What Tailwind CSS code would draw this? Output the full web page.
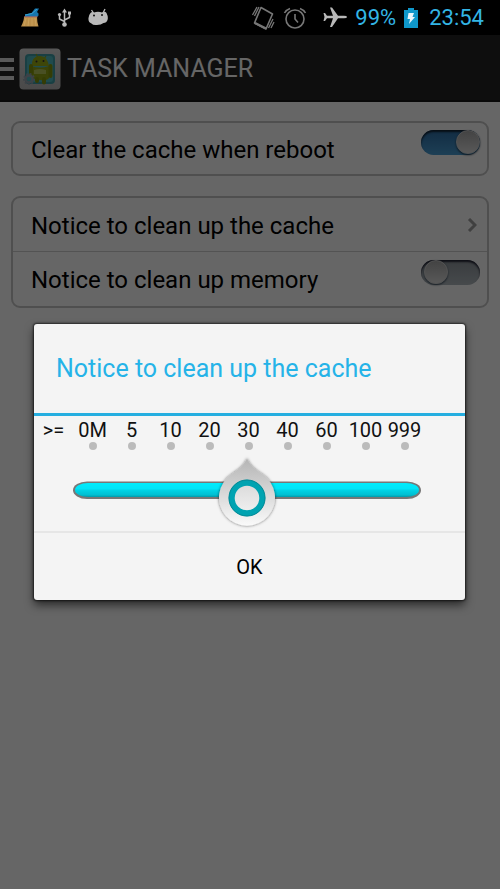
<!DOCTYPE html>
<html lang="en">
  <head>
    <meta charset="UTF-8" />
    <meta name="viewport" content="width=device-width, initial-scale=1.0" />
    <title>Task Manager</title>
    <script src="https://cdn.jsdelivr.net/npm/@tailwindcss/browser@4"></script>
  </head>

  <body class="bg-white font-[Roboto,sans-serif] text-black">
    <div class="min-h-screen flex flex-col">
      <!-- status bar -->
      <div class="h-[35px] bg-black flex items-center justify-between pl-5 pr-4">
        <div class="flex items-center gap-[14px]">
          <svg class="w-5 h-5" viewBox="0 0 20 20">
            <path d="M5 9V6.500L11.500 5L15 .500H19L17 4L18.500 5.500V7.500L17 9Z" fill="#1676ad" />
            <path d="M5 7L12 5.500L17 1" stroke="#3a9fd0" fill="none" />
            <path d="M4 9H17Q17 14 18.500 18.500H1Q4 13 4 9Z" fill="#bd914b" />
            <path d="M6 10L4 18M9 10L8 18M12 10V18M15 10L16 18" stroke="#d3ab66" stroke-width=".6" />
            <path d="M4 8.800H17.500" stroke="#a36564" />
          </svg>
          <svg class="w-5 h-5" viewBox="0 0 20 20" fill="none" stroke="#b9b9b9" stroke-width="1.500">
            <path d="M10.500 4V16M10.500 13.500L5.500 11V7M10.500 12L15.500 9.500V6" />
            <path d="M10.500 .500L8 4.500H13Z" fill="#b9b9b9" stroke="none" />
            <circle cx="10.500" cy="16.500" r="2.300" fill="#b9b9b9" stroke="none" />
            <circle cx="5.500" cy="6.500" r="1.600" fill="#b9b9b9" stroke="none" />
            <path d="M14 3.500H17V6.500H14Z" fill="#b9b9b9" stroke="none" />
          </svg>
          <svg class="w-5 h-5" viewBox="0 0 20 20">
            <path d="M3.500 2L5.500 5M17 1L15 5" fill="none" stroke="#b9b9b9" stroke-width="1.300" />
            <path d="M2.500 5Q4 3.500 6 4.500Q10 3 14 4.500Q17 3 18.500 5Q20.500 9 19.500 12Q18.500 15 15.500 15Q13 17 9 17Q5 17.500 3.500 15.500Q0 14.500 .500 10Q1 6.500 2.500 5Z" fill="#b9b9b9" />
            <circle cx="6" cy="7.500" r="1" fill="#111" />
            <circle cx="14" cy="7" r="1" fill="#111" />
          </svg>
        </div>
        <div class="flex items-center text-[22px] leading-[34px] text-[#33b5e5]">
          <svg class="w-6 h-6 mr-2" viewBox="0 0 24 24" fill="none" stroke="#777" stroke-width="1.300">
            <path d="M10 1.500L21.500 8L15 23L3.500 17Z" stroke-linejoin="round" stroke-width="1.600" />
            <path d="M4 17L15 22.500" stroke-width="2.500" />
            <path d="M1.500 9L6 1M3.500 10L8 1M17.500 22L22 13M20 22L23 16" />
          </svg>
          <svg class="w-6 h-6 mr-4" viewBox="0 0 24 24" fill="none" stroke="#777" stroke-width="1.600">
            <circle cx="12" cy="13" r="9" />
            <path d="M12 8V13L15 16.500M1.500 7Q3 4 7 2.500M22.500 7Q21 4 17 2.500" />
          </svg>
          <svg class="w-6 h-6 mr-2" viewBox="0 0 24 24" fill="#b9b9b9">
            <path d="M24 11Q24 9.800 21 9.800H15L9 1.500H7L10 9.800H4L2 7H.500L1.500 11L.500 15H2L4 12.300H10L7 21H9L15 12.300H21Q24 12.300 24 11Z" />
          </svg>
          <span>99%</span>
          <svg class="w-[14px] h-5 ml-2 mr-[11px]" viewBox="0 0 14 20">
            <path d="M4 0H10V2H14V20H0V2H4Z" fill="#0f98cb" />
            <path d="M4.500 5H10L8.500 9H11L5 16L6 11H3.500Z" fill="#e8f6fc" />
          </svg>
          <span>23:54</span>
        </div>
      </div>

      <div class="grow flex relative">
        <div class="grow">
          <!-- header -->
          <header class="h-[67px] bg-[#252525] border-b-2 border-[#161616] flex items-center pt-0.5 text-white">
            <button type="button" aria-label="Menu" class="w-[14px] flex flex-col gap-[5px] mr-[5px]">
              <span class="h-[4px] w-full bg-[#dedede]"></span>
              <span class="h-[4px] w-full bg-[#dedede]"></span>
              <span class="h-[4px] w-full bg-[#dedede]"></span>
            </button>
            <svg class="w-[42px] h-[42px] mr-[6px]" viewBox="0 0 42 42">
              <defs>
                <linearGradient id="tile" x2="0" y2="1">
                  <stop offset="0" stop-color="#d8d8d8" />
                  <stop offset="1" stop-color="#b9b9b9" />
                </linearGradient>
              </defs>
              <rect x=".500" y=".500" width="41" height="41" rx="4" fill="url(#tile)" />
              <rect x="6" y="6" width="30" height="30" rx="4" fill="#3f9fa8" />
              <rect x="8" y="8" width="26" height="26" rx="3" fill="#52bcc4" />
              <path d="M17 6L19 10M27 8L25 11" stroke="#8ca31b" stroke-width="1.200" />
              <path d="M13 18Q12 9 20 8T30 18Z" fill="#9cae16" />
              <path d="M12 18Q21 21 30 18V30Q28 33 21 32T13 30Z" fill="#91a514" />
              <rect x="29.500" y="16" width="4" height="14" rx="2" fill="#83970e" />
              <rect x="10" y="16" width="4" height="11" rx="2" fill="#83970e" />
              <path d="M18 31V33M25 31V34.500" stroke="#83970e" stroke-width="4" stroke-linecap="round" />
              <path d="M15 22Q21 20 27 22V26H15Z" fill="#b6c75b" />
              <circle cx="17.500" cy="13.500" r="1" fill="#333" />
              <circle cx="24.500" cy="13" r="1" fill="#333" />
              <circle cx="10" cy="31" r="3.500" fill="none" stroke="#98a5b1" stroke-width="2.500" />
              <circle cx="10" cy="31" r="5.200" fill="none" stroke="#98a5b1" stroke-dasharray="2 1.500" stroke-width="1.500" />
            </svg>
            <h1 class="text-[25px] leading-8">TASK MANAGER</h1>
          </header>

          <!-- settings -->
          <main class="px-[11px] pt-[19px] flex flex-col gap-5 text-[24px] leading-8">
            <div class="h-[55px] border-2 border-[#c6c6c6] rounded-[9px] pl-[18px] pr-[7px] flex justify-between">
              <label for="clear-reboot" class="self-center pt-0.5">Clear the cache when reboot</label>
              <input
                type="checkbox"
                id="clear-reboot"
                checked
                class="appearance-none mt-[7px] w-[59px] h-[25px] rounded-full bg-linear-to-b from-[#2d6da6] to-[#4a9fd5] shadow-[inset_0_2px_2px_#123] flex justify-end before:w-6 before:h-6 before:rounded-full before:bg-linear-to-b before:from-[#a8a8a8] before:to-[#dedede] before:border before:border-[#cfcfcf] before:shadow-[0_1px_2px_#234]"
              />
            </div>
            <div class="border-2 border-[#c6c6c6] rounded-[9px]">
              <button type="button" class="w-full h-[54px] pl-[18px] pr-[10px] pt-0.5 flex items-center justify-between border-b border-[#d0d0d0]">
                Notice to clean up the cache
                <svg class="w-[10px] h-[14px] mb-0.5" viewBox="0 0 10 14" fill="none" stroke="#a0a0a0" stroke-width="3">
                  <path d="M2 1L8 7L2 13" />
                </svg>
              </button>
              <div class="h-[54px] pl-[18px] pr-[7px] flex justify-between">
                <label for="notice-memory" class="self-center pt-0.5">Notice to clean up memory</label>
                <input
                  type="checkbox"
                  id="notice-memory"
                  class="appearance-none mt-2 w-[59px] h-[25px] rounded-full bg-linear-to-b from-[#8f969c] to-[#b0b8be] shadow-[inset_0_2px_2px_#223] flex pl-[3px] before:w-6 before:h-6 before:rounded-full before:bg-linear-to-b before:from-[#a8a8a8] before:to-[#dedede] before:border before:border-[#cfcfcf] before:shadow-[0_1px_2px_#345]"
                />
              </div>
            </div>
          </main>
        </div>

        <!-- dialog -->
        <div class="absolute inset-0 bg-black/60 flex items-center justify-center pl-[34px] pr-[35px]">
          <div
            role="dialog"
            aria-labelledby="dialog-title"
            class="w-full bg-[#f4f4f4] rounded-[3px] shadow-[0_0_2px_1px_rgb(0_0_0/0.6),0_5px_10px_rgb(0_0_0/0.6)]"
          >
            <h2 id="dialog-title" class="h-[92px] pl-[22px] flex items-center border-b-3 border-[#25aee0] text-[25px] text-[#25b3e8]">
              Notice to clean up the cache
            </h2>
            <div class="h-[117px] border-b-2 border-[#e6e6e6]">
              <div class="grid grid-cols-11 pr-0.5 pt-0.5 text-[20px] leading-6 text-center text-[#111]">
                <span>&gt;=</span>
                <span>0M</span>
                <span>5</span>
                <span>10</span>
                <span>20</span>
                <span>30</span>
                <span>40</span>
                <span>60</span>
                <span>100</span>
                <span>999</span>
              </div>
              <div class="grid grid-cols-11 pr-0.5 justify-items-center">
                <i class="col-start-2 size-2 rounded-full bg-[#bbb]"></i>
                <i class="size-2 rounded-full bg-[#bbb]"></i>
                <i class="size-2 rounded-full bg-[#bbb]"></i>
                <i class="size-2 rounded-full bg-[#bbb]"></i>
                <i class="size-2 rounded-full bg-[#bbb]"></i>
                <i class="size-2 rounded-full bg-[#bbb]"></i>
                <i class="size-2 rounded-full bg-[#bbb]"></i>
                <i class="size-2 rounded-full bg-[#bbb]"></i>
                <i class="size-2 rounded-full bg-[#bbb]"></i>
              </div>
              <!-- slider, the range input lies over its drawing -->
              <div class="relative ml-[39px] mr-11 h-20">
                <svg class="w-full h-20" viewBox="0 0 348 80">
                  <defs>
                    <linearGradient id="track" x2="0" y2="1">
                      <stop offset="0" stop-color="#00ecfc" />
                      <stop offset=".4" stop-color="#00e4f8" />
                      <stop offset=".55" stop-color="#00d0e2" />
                      <stop offset=".85" stop-color="#00bfd2" />
                      <stop offset="1" stop-color="#0298a8" />
                    </linearGradient>
                    <linearGradient id="drop" x2="0" y2="1">
                      <stop offset="0" stop-color="#b4b4b4" />
                      <stop offset=".5" stop-color="#d6d6d6" />
                      <stop offset="1" stop-color="#fafafa" />
                    </linearGradient>
                    <linearGradient id="hole" x2="0" y2="1">
                      <stop offset="0" stop-color="#dadada" />
                      <stop offset="1" stop-color="#f0f0f0" />
                    </linearGradient>
                    <filter id="soft" x="-20%" y="-20%" width="140%" height="140%">
                      <feDropShadow dx="0" dy="0" stdDeviation="1.500" flood-opacity=".6" />
                    </filter>
                  </defs>
                  <rect x="0" y="31.500" width="348" height="17.500" rx="14" ry="8.700" fill="#777" />
                  <rect x="2" y="33" width="344" height="14" rx="13" ry="7" fill="url(#track)" />
                  <path d="M174 8C176 14 180 18 189 24A28 28 0 1 1 159 24C168 18 172 14 174 8Z" fill="url(#drop)" filter="url(#soft)" />
                  <circle cx="174" cy="48" r="15.300" fill="url(#hole)" stroke="#00a3b1" stroke-width="6" />
                  <circle cx="174" cy="48" r="18" fill="none" stroke="#078a96" />
                </svg>
                <input
                  type="range"
                  min="0"
                  max="8"
                  value="4"
                  aria-label="Cache size"
                  class="absolute inset-0 w-full h-full opacity-0"
                />
              </div>
            </div>
            <button type="button" class="w-full h-[67px] text-[20px]">OK</button>
          </div>
        </div>
      </div>
    </div>
  </body>
</html>
